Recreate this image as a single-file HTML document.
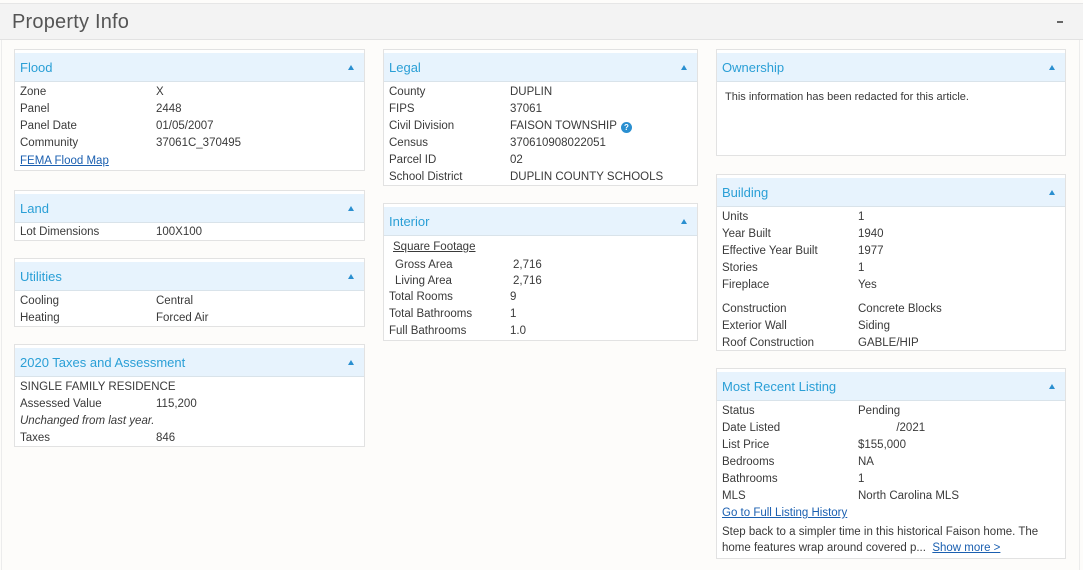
<!DOCTYPE html>
<html><head><meta charset="utf-8"><style>
*{margin:0;padding:0;box-sizing:border-box}
body{width:1083px;height:570px;overflow:hidden;background:#fdfcfa;font-family:"Liberation Sans",Arial,sans-serif;font-size:11.5px;color:#3a3a3a;position:relative}
.top{position:absolute;left:0;top:3px;width:1083px;height:37px;background:#f3f3f3;border-top:1px solid #e6e6e6;border-bottom:1px solid #e2e2e2}
.top h1{position:absolute;left:12px;top:7px;font-weight:normal;font-size:20px;color:#555;letter-spacing:.2px}
.top .min{position:absolute;left:1057px;top:17px;width:6px;height:2px;background:#666}
.lline{position:absolute;left:1px;top:40px;width:1px;height:530px;background:#ececec}
.rline{position:absolute;left:1079px;top:40px;width:1px;height:530px;background:#ececec}
.p{position:absolute;border:1px solid #e2e2e2;background:#fff;padding-top:3px}
.h{height:29px;background:#e7f3fd;border-bottom:1px solid #d9e3ea;position:relative}
.h span{position:absolute;left:5px;top:7px;font-size:13px;color:#2a9fd6}
.h i{position:absolute;right:10px;top:12px;width:0;height:0;border-left:3.5px solid transparent;border-right:3.5px solid transparent;border-bottom:5px solid #2a8fd0}
.b{padding:2px 5px 0}
.r{height:17px;line-height:17px;white-space:nowrap;position:relative}
.r .v{position:absolute;top:0}
a{color:#1a5fb0;text-decoration:underline}
.q{display:inline-block;width:11px;height:11px;border-radius:50%;background:#2a8fd0;color:#fff;font-size:8px;line-height:11px;text-align:center;font-weight:bold;vertical-align:-1px;margin-left:4px}
</style></head><body>
<div class="top"><h1>Property Info</h1><div class="min"></div></div>
<div class="lline"></div><div class="rline"></div>

<div class="p" style="left:14px;top:49px;width:351px;height:122px">
<div class="h"><span>Flood</span><i></i></div>
<div class="b">
<div class="r">Zone<span class="v" style="left:136px">X</span></div>
<div class="r">Panel<span class="v" style="left:136px">2448</span></div>
<div class="r">Panel Date<span class="v" style="left:136px">01/05/2007</span></div>
<div class="r">Community<span class="v" style="left:136px">37061C_370495</span></div>
<div class="r" style="top:1px"><a>FEMA Flood Map</a></div>
</div></div>

<div class="p" style="left:14px;top:190px;width:351px;height:51px">
<div class="h"><span>Land</span><i></i></div>
<div class="b" style="padding-top:1px"><div class="r">Lot Dimensions<span class="v" style="left:136px">100X100</span></div></div></div>

<div class="p" style="left:14px;top:258px;width:351px;height:69px">
<div class="h"><span>Utilities</span><i></i></div>
<div class="b">
<div class="r">Cooling<span class="v" style="left:136px">Central</span></div>
<div class="r">Heating<span class="v" style="left:136px">Forced Air</span></div>
</div></div>

<div class="p" style="left:14px;top:344px;width:351px;height:103px">
<div class="h"><span>2020 Taxes and Assessment</span><i></i></div>
<div class="b">
<div class="r">SINGLE FAMILY RESIDENCE</div>
<div class="r">Assessed Value<span class="v" style="left:136px">115,200</span></div>
<div class="r"><em>Unchanged from last year.</em></div>
<div class="r">Taxes<span class="v" style="left:136px">846</span></div>
</div></div>

<div class="p" style="left:383px;top:49px;width:315px;height:137px">
<div class="h"><span>Legal</span><i></i></div>
<div class="b">
<div class="r">County<span class="v" style="left:121px">DUPLIN</span></div>
<div class="r">FIPS<span class="v" style="left:121px">37061</span></div>
<div class="r">Civil Division<span class="v" style="left:121px">FAISON TOWNSHIP<span class="q">?</span></span></div>
<div class="r">Census<span class="v" style="left:121px">370610908022051</span></div>
<div class="r">Parcel ID<span class="v" style="left:121px">02</span></div>
<div class="r">School District<span class="v" style="left:121px">DUPLIN COUNTY SCHOOLS</span></div>
</div></div>

<div class="p" style="left:383px;top:203px;width:315px;height:138px">
<div class="h"><span>Interior</span><i></i></div>
<div class="b" style="padding-top:1px">
<div class="r" style="height:20px;line-height:20px;padding-left:4px"><span style="text-decoration:underline">Square Footage</span></div>
<div class="r" style="padding-left:6px;height:16px;line-height:16px">Gross Area<span class="v" style="left:124px">2,716</span></div>
<div class="r" style="padding-left:6px;height:16px;line-height:16px">Living Area<span class="v" style="left:124px">2,716</span></div>
<div class="r">Total Rooms<span class="v" style="left:121px">9</span></div>
<div class="r">Total Bathrooms<span class="v" style="left:121px">1</span></div>
<div class="r">Full Bathrooms<span class="v" style="left:121px">1.0</span></div>
</div></div>

<div class="p" style="left:716px;top:49px;width:350px;height:107px">
<div class="h"><span>Ownership</span><i></i></div>
<div class="b" style="padding:9px 8px;font-size:11px">This information has been redacted for this article.</div></div>

<div class="p" style="left:716px;top:174px;width:350px;height:177px">
<div class="h"><span>Building</span><i></i></div>
<div class="b">
<div class="r">Units<span class="v" style="left:136px">1</span></div>
<div class="r">Year Built<span class="v" style="left:136px">1940</span></div>
<div class="r">Effective Year Built<span class="v" style="left:136px">1977</span></div>
<div class="r">Stories<span class="v" style="left:136px">1</span></div>
<div class="r">Fireplace<span class="v" style="left:136px">Yes</span></div>
<div class="r" style="margin-top:7px">Construction<span class="v" style="left:136px">Concrete Blocks</span></div>
<div class="r">Exterior Wall<span class="v" style="left:136px">Siding</span></div>
<div class="r">Roof Construction<span class="v" style="left:136px">GABLE/HIP</span></div>
</div></div>

<div class="p" style="left:716px;top:368px;width:350px;height:191px">
<div class="h"><span>Most Recent Listing</span><i></i></div>
<div class="b">
<div class="r">Status<span class="v" style="left:136px">Pending</span></div>
<div class="r">Date Listed<span class="v" style="left:136px">&nbsp;&nbsp;&nbsp;&nbsp;&nbsp;&nbsp;&nbsp;&nbsp;&nbsp;&nbsp;&nbsp;&nbsp;/2021</span></div>
<div class="r">List Price<span class="v" style="left:136px">$155,000</span></div>
<div class="r">Bedrooms<span class="v" style="left:136px">NA</span></div>
<div class="r">Bathrooms<span class="v" style="left:136px">1</span></div>
<div class="r">MLS<span class="v" style="left:136px">North Carolina MLS</span></div>
<div class="r"><a>Go to Full Listing History</a></div>
<div style="line-height:16px;margin-top:2px">Step back to a simpler time in this historical Faison home. The home features wrap around covered p...&nbsp; <a>Show more &gt;</a></div>
</div></div>
</body></html>
